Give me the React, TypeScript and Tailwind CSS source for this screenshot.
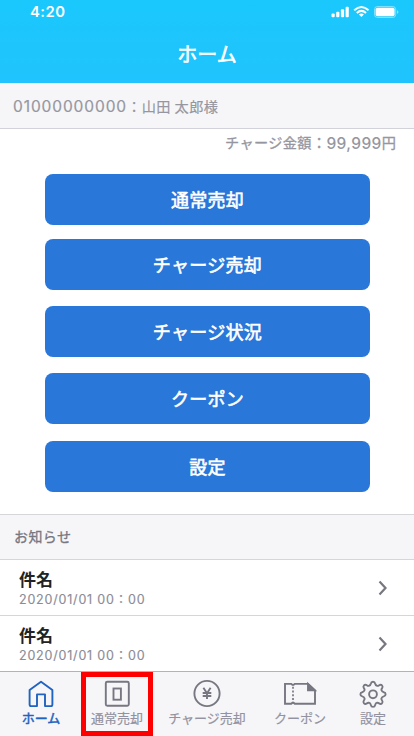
import type { ReactNode } from "react";

const menu = [
  { label: "通常売却", gap: "mt-[14px]" },
  { label: "チャージ売却", gap: "mt-[14px]" },
  { label: "チャージ状況", gap: "mt-4" },
  { label: "クーポン", gap: "mt-4" },
  { label: "設定", gap: "mt-[17px]" },
];

function StatusIcons() {
  return (
    <svg className="h-6 w-[75px]" viewBox="330 0 75 24" fill="#fff">
      <rect x="331.5" y="13.5" width="3.2" height="3.7" rx="1" />
      <rect x="336.2" y="11.7" width="3.2" height="5.5" rx="1" />
      <rect x="340.9" y="9.3" width="3.2" height="7.9" rx="1" />
      <rect x="345.6" y="6.8" width="3.2" height="10.4" rx="1" />
      <g fill="none" stroke="#fff" strokeWidth="2.1">
        <path d="M354.2 10.3Q361.4 3.7 368.6 10.3" />
        <path d="M356.8 13Q361.4 8.9 366 13" />
      </g>
      <path d="M358.9 14.6Q361.4 12.6 363.9 14.6L361.4 17.1Z" />
      <rect x="374.5" y="6.5" width="21.2" height="11" rx="3" fill="none" stroke="#fff" strokeOpacity=".45" />
      <rect x="375.6" y="7.8" width="19" height="8.4" rx="1.8" />
      <path d="M397 10.3Q398.4 11 398.4 12.1T397 13.9Z" fillOpacity=".5" />
    </svg>
  );
}

function HomeIcon() {
  return (
    <svg className="h-[30px] w-[30px]" viewBox="0 0 30 30" fill="none" stroke="#2163c0" strokeWidth="1.9" strokeLinejoin="round">
      <path d="M3.6 11 15 2.7l11.4 8.3V25.5q0 1.6-1.6 1.6H19V15.4h-8V27.1H5.2q-1.6 0-1.6-1.6Z" />
    </svg>
  );
}

function SellIcon() {
  return (
    <svg className="h-[30px] w-[30px]" viewBox="0 0 30 30" fill="none" stroke="#777781" strokeWidth="1.9">
      <rect x="3.8" y="2.8" width="23" height="24" rx="1.5" />
      <rect x="11.5" y="9.5" width="7.4" height="11.2" />
    </svg>
  );
}

function YenIcon() {
  return (
    <svg className="h-[30px] w-[30px]" viewBox="0 0 30 30" fill="none" stroke="#777781" strokeWidth="1.9">
      <circle cx="15" cy="14.5" r="12.6" />
      <path d="m11.4 8.8 3.6 5.5 3.6-5.5M15 14v6M10.7 14h8.6M10.7 17h8.6" />
    </svg>
  );
}

function CouponIcon() {
  return (
    <svg className="h-[30px] w-[34px]" viewBox="0 0 34 30" fill="none" stroke="#777781" strokeWidth="1.9">
      <path d="M2 4.9h6.2q1.8 2.2 3.6 0H25l7 6.5v13.4H11.8q-1.8-2.2-3.6 0H2Z" />
      <path d="M25 4.9v6.5h7Z" fill="#777781" />
      <path d="M10 7.8v15" strokeDasharray="2 1.7" strokeWidth="1.7" />
    </svg>
  );
}

function GearIcon() {
  return (
    <svg className="h-[30px] w-[30px]" viewBox="0 0 30 30" fill="none" stroke="#777781" strokeWidth="1.9" strokeLinejoin="round">
      <circle cx="15" cy="15.3" r="3.9" />
      <path
        transform="translate(15 15.3)"
        d="M-2.1-10.8Q-1.8-12.6 0-12.6T2.1-10.8Q2.5-8.9 4.2-8.4 5.2-8.3 6.2-9.1 7.8-10.2 9-9T9.1-6.2Q8.3-5.2 8.4-4.2 8.9-2.5 10.8-2.1 12.6-1.8 12.6 0T10.8 2.1Q8.9 2.5 8.4 4.2 8.3 5.2 9.1 6.2 10.2 7.8 9 9T6.2 9.1Q5.2 8.3 4.2 8.4 2.5 8.9 2.1 10.8 1.8 12.6 0 12.6T-2.1 10.8Q-2.5 8.9-4.2 8.4-5.2 8.3-6.2 9.1-7.8 10.2-9 9T-9.1 6.2Q-8.3 5.2-8.4 4.2-8.9 2.5-10.8 2.1-12.6 1.8-12.6 0T-10.8-2.1Q-8.9-2.5-8.4-4.2-8.3-5.2-9.1-6.2-10.2-7.8-9-9T-6.2-9.1Q-5.2-8.3-4.2-8.4-2.5-8.9-2.1-10.8Z"
      />
    </svg>
  );
}

function Tab({ icon, label, className }: { icon: ReactNode; label: string; className: string }) {
  return (
    <div className={`flex flex-col items-center pt-[7px] ${className}`}>
      {icon}
      <span className="whitespace-nowrap text-[13px] leading-[18px]">{label}</span>
    </div>
  );
}

function NewsRow({ last }: { last?: boolean }) {
  return (
    <div className={`flex h-14 items-center justify-between border-b pl-[19px] pr-[26px] ${last ? "border-[#b2b2bb]" : "border-[#d5d5da]"}`}>
      <div className="flex flex-col pt-[2px]">
        <span className="text-[17px] font-bold leading-[21px] text-[#222]">件名</span>
        <span className="whitespace-nowrap pt-px font-['Inter','Noto_Sans_CJK_JP',sans-serif] text-[12.5px] font-normal leading-[20px] tracking-[0.8px] text-[#8c8c97] [-webkit-text-stroke:0.15px_#8c8c97]">
          2020/01/01 00：00
        </span>
      </div>
      <svg className="h-4 w-[10px]" viewBox="0 0 10 16" fill="none" stroke="#777781" strokeWidth="2.2">
        <path d="m1.5 1.5 6 6.5-6 6.5" />
      </svg>
    </div>
  );
}

export default function App() {
  return (
    <div className="flex h-[736px] w-[414px] flex-col overflow-hidden bg-white font-['Noto_Sans_CJK_JP',sans-serif]">
      <header className="h-[83px] bg-linear-to-b from-[#1ac8fc] to-[#20c3fd] text-white">
        <div className="flex h-6 items-center justify-between pl-[30px] pr-[9px]">
          <span className="font-['Inter',sans-serif] text-[14.8px] font-semibold tracking-[0.5px]">4:20</span>
          <StatusIcons />
        </div>
        <h1 className="pt-[15px] text-center text-[20px] font-normal leading-[30px] [-webkit-text-stroke:0.6px_white]">ホーム</h1>
      </header>
      <div className="flex h-[46px] items-center whitespace-nowrap border-b border-[#d2d2da] bg-[#f6f6f9] pl-[13px] pt-px text-[14.2px] text-[#9696a0]">
        <span className="pt-[2px] font-['Inter',sans-serif] text-[15.5px] tracking-[0.9px] [-webkit-text-stroke:0.2px_#9696a0]">01000000000</span>
        <span className="pt-px tracking-[0.45px] [-webkit-text-stroke:0.2px_#9696a0]">：山田 太郎様</span>
      </div>
      <div className="flex h-[31px] items-start justify-end whitespace-nowrap pr-[18px] text-[14.2px] leading-[27px] text-[#9696a0]">
        <span className="tracking-[0.35px] [-webkit-text-stroke:0.3px_#9696a0]">チャージ金額：</span>
        <span className="pt-px font-['Inter',sans-serif] text-[15.5px] font-medium tracking-[0.4px]">99,999</span>
        <span className="[-webkit-text-stroke:0.3px_#9696a0]">円</span>
      </div>
      <main className="flex h-[354px] flex-col px-[45px]">
        {menu.map((item) => (
          <button
            key={item.label}
            className={`flex h-[51px] w-[325px] shrink-0 items-center justify-center rounded-lg bg-[#2977d9] pb-px text-[18px] font-normal tracking-[0.3px] text-white [-webkit-text-stroke:0.6px_white] ${item.gap}`}
          >
            {item.label}
          </button>
        ))}
      </main>
      <h2 className="flex h-[46px] shrink-0 items-center border-y border-[#d5d5da] bg-[#f6f6f9] pb-px pl-[14px] text-[14px] font-normal tracking-[0.4px] text-[#777781] [-webkit-text-stroke:0.3px_#777781]">お知らせ</h2>
      <NewsRow />
      <NewsRow last />
      <nav className="flex h-16 bg-[#f6f6f9] text-[#9292a0] [-webkit-text-stroke:0.2px_currentColor]">
        <Tab className="w-[82px] shrink-0 text-[#2163c0] [-webkit-text-stroke:0.5px_#2163c0]" icon={<HomeIcon />} label="ホーム" />
        <Tab className="-ml-px w-[72px] shrink-0 border-[5px] border-[#ff0000] !pt-[2px]" icon={<SellIcon />} label="通常売却" />
        <Tab className="w-[108px]" icon={<YenIcon />} label="チャージ売却" />
        <Tab className="w-[78px]" icon={<CouponIcon />} label="クーポン" />
        <Tab className="w-[68px]" icon={<GearIcon />} label="設定" />
      </nav>
    </div>
  );
}
